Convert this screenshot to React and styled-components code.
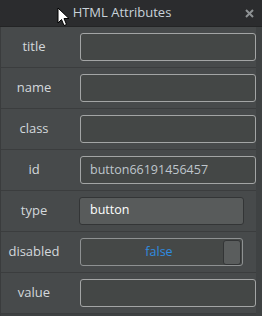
import React from "react";
import styled, { createGlobalStyle } from "styled-components";

const GlobalStyle = createGlobalStyle`
  html, body {
    margin: 0;
    padding: 0;
    background: #2b2c2e;
  }
  body {
    font-family: "Open Sans", "Noto Sans", sans-serif;
  }
`;

const attributes = [
  { name: "title", kind: "text", value: "" },
  { name: "name", kind: "text", value: "" },
  { name: "class", kind: "text", value: "" },
  { name: "id", kind: "text", value: "button66191456457" },
  { name: "type", kind: "select", value: "button" },
  { name: "disabled", kind: "toggle", value: "false" },
  { name: "value", kind: "text", value: "" },
];

const App = () => {
  return (
    <>
      <GlobalStyle />
      <Window>
        <Header>
          <Title>HTML Attributes</Title>
          <Close>
            <svg width="9" height="9" viewBox="0 0 9 9">
              <path d="M1 1 L8 8 M8 1 L1 8" stroke="#8e9294" strokeWidth="2" />
            </svg>
          </Close>
          <Cursor>
            <svg width="14" height="20" viewBox="0 0 14 20">
              <path
                d="M1 1 L1 16 L4.5 12.5 L7 18.5 L9.5 17.5 L7 11.5 L12 11.5 Z"
                fill="#ffffff"
                stroke="#000000"
                strokeWidth="1"
                strokeLinejoin="round"
              />
            </svg>
          </Cursor>
        </Header>
        <Body>
          <Rows>
            {attributes.map((attr) => (
              <Row key={attr.name}>
                <Label>{attr.name}</Label>
                {attr.kind === "text" && <TextField>{attr.value}</TextField>}
                {attr.kind === "select" && <Select>{attr.value}</Select>}
                {attr.kind === "toggle" && (
                  <Toggle>
                    <ToggleText>{attr.value}</ToggleText>
                    <Knob />
                  </Toggle>
                )}
              </Row>
            ))}
          </Rows>
          <Gutter />
        </Body>
      </Window>
    </>
  );
};

const Window = styled.div`
  width: 262px;
  height: 316px;
  display: flex;
  flex-direction: column;
  background: #2b2c2e;
  overflow: hidden;
`;

const Header = styled.div`
  position: relative;
  height: 26px;
  flex-shrink: 0;
  display: flex;
  align-items: center;
  justify-content: center;
  border-bottom: 1px solid #232425;
`;

const Title = styled.div`
  color: #c9d2da;
  font-size: 13px;
  padding-right: 18px;
  margin-top: -2px;
`;

const Close = styled.div`
  position: absolute;
  right: 8px;
  top: 9px;
  display: flex;
`;

const Cursor = styled.div`
  position: absolute;
  left: 57px;
  top: 7px;
  display: flex;
`;

const Body = styled.div`
  flex: 1;
  display: flex;
  background: #3e4142;
`;

const Rows = styled.div`
  width: 255px;
  display: flex;
  flex-direction: column;
  border-left: 1px solid #3a3c3d;
`;

const Row = styled.div`
  height: 40px;
  flex-shrink: 0;
  display: flex;
  align-items: center;
  background: #474a4b;
  border-bottom: 1px solid #3b3d3e;
`;

const Label = styled.div`
  width: 66px;
  margin-right: 13px;
  text-align: center;
  color: #d3d8dc;
  font-size: 13px;
  margin-top: -2px;
`;

const TextField = styled.div`
  width: 176px;
  height: 28px;
  box-sizing: border-box;
  border: 1px solid #a3a5a5;
  border-radius: 3px;
  background: #444746;
  color: #bfc6cc;
  font-size: 12.5px;
  line-height: 26px;
  padding-left: 9px;
`;

const Select = styled.div`
  width: 165px;
  height: 28px;
  box-sizing: border-box;
  border: 1px solid #333536;
  border-radius: 3px;
  background: #585b5b;
  color: #ffffff;
  font-size: 12.5px;
  line-height: 24px;
  padding-left: 10px;
  margin-left: -1px;
`;

const Toggle = styled.div`
  width: 163px;
  height: 28px;
  box-sizing: border-box;
  border: 1px solid #8e9192;
  border-radius: 3px;
  background: #454847;
  display: flex;
  align-items: center;
  padding-right: 1px;
`;

const ToggleText = styled.div`
  flex: 1;
  text-align: center;
  color: #2f8ce0;
  font-size: 12.5px;
  padding-left: 14px;
  margin-top: -2px;
`;

const Knob = styled.div`
  width: 18px;
  height: 25px;
  box-sizing: border-box;
  border: 1px solid #333536;
  border-radius: 3px;
  background: #5a5d5d;
`;

const Gutter = styled.div`
  flex: 1;
  background: #3f4243;
`;

export default App;
